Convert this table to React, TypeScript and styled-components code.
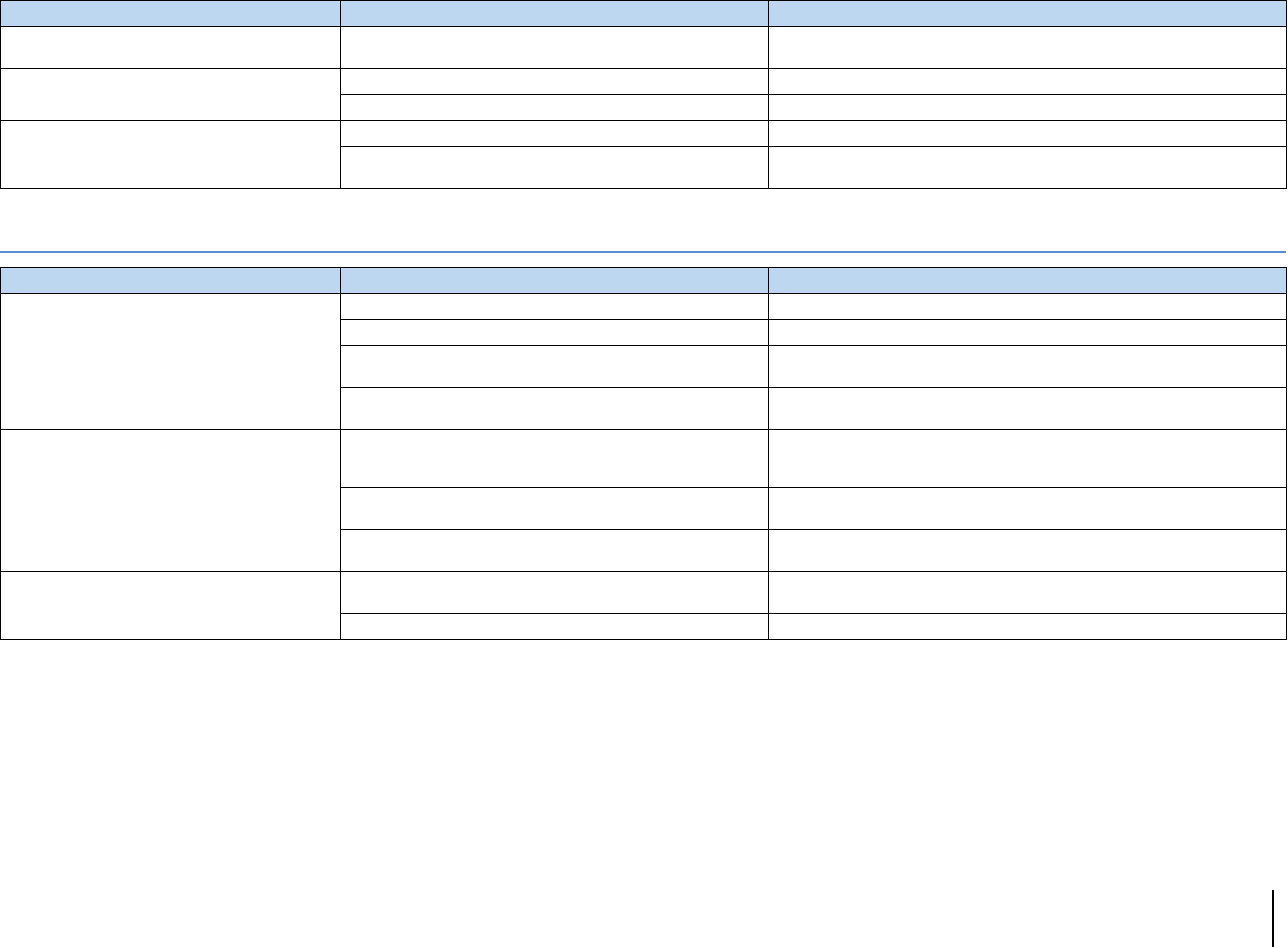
import styled, { createGlobalStyle } from 'styled-components';

const GlobalStyle = createGlobalStyle`
	html,
	body {
		margin: 0;
		padding: 0;
		background: #ffffff;
		font-family: 'Liberation Sans', Arial, sans-serif;
		font-size: 13px;
	}
`;

type Section = { spans: number[] }[];

// each group: first column spans its sub-rows, heights given in text lines
const firstTable: Section = [{ spans: [2] }, { spans: [1, 1] }, { spans: [1, 2] }];
const secondTable: Section = [
	{ spans: [1, 1, 2, 2] },
	{ spans: [3, 2, 2] },
	{ spans: [2, 1] },
];

function SpecTable({ groups }: { groups: Section }) {
	return (
		<StyledTable>
			<colgroup>
				<col style={{ width: 340 }} />
				<col style={{ width: 428 }} />
				<col />
			</colgroup>
			<thead>
				<tr>
					<HeaderCell $lines={1} />
					<HeaderCell $lines={1} />
					<HeaderCell $lines={1} />
				</tr>
			</thead>
			<tbody>
				{groups.map((group, g) =>
					group.spans.map((lines, i) => (
						<tr key={`${g}-${i}`}>
							{i === 0 && <Cell rowSpan={group.spans.length} $lines={1} />}
							<Cell $lines={lines} />
							<Cell $lines={lines} />
						</tr>
					))
				)}
			</tbody>
		</StyledTable>
	);
}

export default function App() {
	return (
		<>
			<GlobalStyle />
			<Page>
				<SpecTable groups={firstTable} />
				<Divider />
				<SpecTable groups={secondTable} />
				<Footer>
					<PageMark />
				</Footer>
			</Page>
		</>
	);
}

const Page = styled.div`
	width: 1288px;
	height: 947px;
	display: flex;
	flex-direction: column;
	overflow: hidden;
`;

const StyledTable = styled.table`
	width: 1287px;
	border-collapse: collapse;
	table-layout: fixed;
	border: 1px solid #000000;
`;

const Cell = styled.td<{ $lines: number }>`
	border: 1px solid #000000;
	padding: 0 6px;
	height: ${({ $lines }) => 10 + $lines * 16}px;
	box-sizing: border-box;
	vertical-align: top;
	line-height: 16px;
`;

const HeaderCell = styled.th<{ $lines: number }>`
	border: 1px solid #000000;
	background: #bdd7f1;
	padding: 0 6px;
	height: ${({ $lines }) => 10 + $lines * 16}px;
	box-sizing: border-box;
	font-weight: bold;
	text-align: left;
`;

const Divider = styled.div`
	width: 1286px;
	height: 2px;
	background: #5b8bd0;
	margin: 62px 0 14px;
`;

const Footer = styled.div`
	flex: 1;
	display: flex;
	justify-content: flex-end;
	align-items: flex-end;
	padding-right: 14px;
`;

const PageMark = styled.div`
	width: 2px;
	height: 57px;
	background: #000000;
`;
